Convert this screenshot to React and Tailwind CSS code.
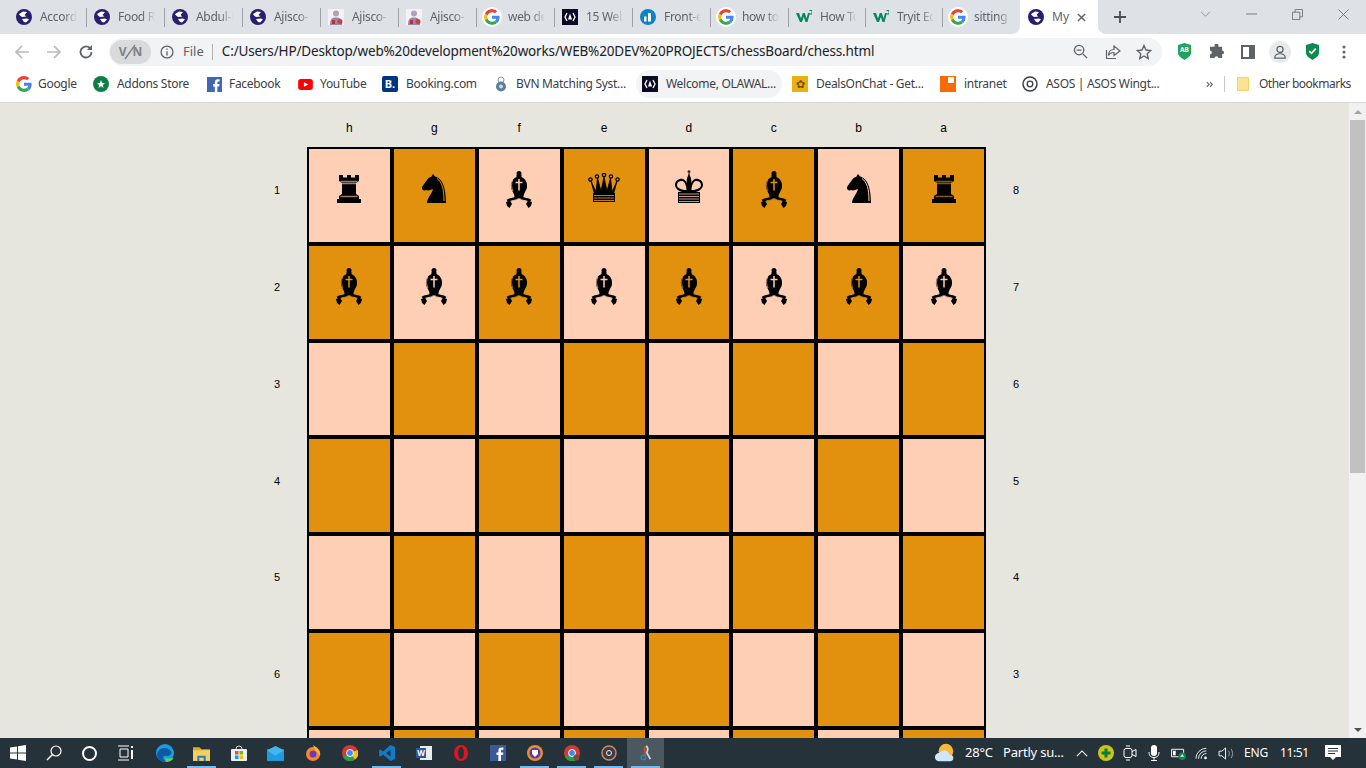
import React from 'react';

const tabs = [
    { icon: 'globe', title: 'Accordion' },
    { icon: 'globe', title: 'Food Recipe' },
    { icon: 'globe', title: 'Abdul-Hakeem' },
    { icon: 'globe', title: 'Ajisco-' },
    { icon: 'avatar', title: 'Ajisco-' },
    { icon: 'avatar', title: 'Ajisco-' },
    { icon: 'google', title: 'web design' },
    { icon: 'fcc', title: '15 Web Dev' },
    { icon: 'bars', title: 'Front-end' },
    { icon: 'google', title: 'how to make' },
    { icon: 'w3', title: 'How To Make', narrow: true },
    { icon: 'w3', title: 'Tryit Editor', narrow: true },
    { icon: 'google', title: 'sitting room', narrow: true, last: true },
];

const Globe = () => (
    <svg viewBox="0 0 16 16" className="w-4 h-4 shrink-0">
        <circle cx="8" cy="8" r="8" fill="#28206f" />
        <path d="M3 5 L7 2.500 L11 3 L8.500 6 L10.500 7.500 L6 8 L4 6.500 Z M6 10 L11 9.500 L13 10.500 L10 13.500 L8 13 Z" fill="#fff" />
    </svg>
);

const GoogleG = () => (
    <svg viewBox="0 0 48 48" className="w-4 h-4 shrink-0">
        <path fill="#EA4335" d="M24 9.500c3.500 0 6.700 1.300 9.100 3.500l6.800-6.800C35.800 2.400 30.300 0 24 0 14.600 0 6.500 5.400 2.600 13.200l7.900 6.100C12.400 13.600 17.700 9.500 24 9.500z" />
        <path fill="#4285F4" d="M46.900 24.500c0-1.600-.1-3.100-.4-4.500H24v9h12.900c-.6 3-2.200 5.500-4.700 7.200l7.700 6c4.500-4.200 7-10.300 7-17.700z" />
        <path fill="#FBBC05" d="M10.500 28.700c-.5-1.400-.8-3-.8-4.700s.3-3.200.8-4.700l-7.900-6.100C.9 16.500 0 20.100 0 24s.9 7.500 2.600 10.800l7.900-6.100z" />
        <path fill="#34A853" d="M24 48c6.500 0 11.900-2.100 15.900-5.800l-7.700-6c-2.200 1.400-4.900 2.300-8.200 2.300-6.300 0-11.600-4.200-13.500-9.800l-7.900 6.100C6.500 42.600 14.600 48 24 48z" />
    </svg>
);

const GoogleBadge = () => (
    <span className="w-[16px] h-[16px] rounded-full bg-white flex items-center justify-center shrink-0 outline outline-2 outline-white">
        <GoogleG />
    </span>
);

const Avatar = () => (
    <svg viewBox="0 0 16 16" className="w-4 h-4 shrink-0">
        <rect width="16" height="16" fill="#f4f2f6" />
        <circle cx="8" cy="4.500" r="3" fill="#a9a4b8" />
        <path d="M2 16 C2 10 4 8.500 8 8.500 S14 10 14 16 Z" fill="#8f8ba3" />
        <rect x="4" y="11" width="3" height="4" fill="#c62a3a" />
        <circle cx="12" cy="12.500" r="2.500" fill="#d23a4a" />
    </svg>
);

const Fcc = () => (
    <svg viewBox="0 0 16 16" className="w-4 h-4 shrink-0">
        <rect width="16" height="16" fill="#0a0a23" />
        <path d="M5 4 L3 8 L5 12 M11 4 L13 8 L11 12" stroke="#fff" strokeWidth="1.300" fill="none" />
        <path d="M8 4.500 L10 10.500 H6 Z" fill="#fff" />
    </svg>
);

const Bars = () => (
    <svg viewBox="0 0 16 16" className="w-4 h-4 shrink-0">
        <circle cx="8" cy="8" r="8" fill="#0a84c8" />
        <rect x="4" y="7.500" width="2.500" height="5" fill="#fff" />
        <rect x="8" y="4" width="3" height="8.500" fill="#fff" />
    </svg>
);

const W3 = () => (
    <svg viewBox="0 0 16 16" className="w-4 h-4 shrink-0">
        <path d="M0 4 H3 L5 9.500 L6.800 4 H8.800 L10.600 9.500 L12 4 H14 L11.500 13 H9.500 L7.800 8 L6 13 H4 Z" fill="#04895c" />
        <path d="M13.500 1.500 H16 V5 H13.500" stroke="#04895c" strokeWidth="1" fill="none" />
    </svg>
);

const tabIcons = { globe: Globe, google: GoogleBadge, avatar: Avatar, fcc: Fcc, bars: Bars, w3: W3 };

const Tab = ({ icon, title, narrow, last }) => {
    const Icon = tabIcons[icon];
    return (
        <div className={`h-[34px] flex items-center pl-[7px] shrink-0 ${narrow ? 'w-[77px]' : 'w-[78px]'}`}>
            <Icon />
            <span className="ml-[8px] w-[37px] text-[12px] tracking-[-0.3px] text-[#5f6368] whitespace-nowrap overflow-hidden [mask-image:linear-gradient(to_right,#000_65%,transparent)]">{title}</span>
            <div className="flex-1" />
            {!last && <div className="w-px h-[19px] bg-[#9da0a5]" />}
        </div>
    );
};

const TabStrip = () => (
    <div className="h-[34px] bg-white flex shrink-0">
        <div className="bg-[#dee1e6] flex pl-[9px] rounded-br-[8px]">
            {tabs.map((t, i) => <Tab key={i} {...t} />)}
        </div>
        <div className="w-[78px] h-[34px] bg-white rounded-t-[8px] flex items-center pl-[8px] shrink-0">
            <Globe />
            <span className="ml-[8px] w-[25px] text-[12px] text-[#5f6368]">My</span>
            <svg viewBox="0 0 10 10" className="w-[9px] h-[9px]"><path d="M1 1 L9 9 M9 1 L1 9" stroke="#5f6368" strokeWidth="1.600" /></svg>
        </div>
        <div className="flex-1 bg-[#dee1e6] rounded-bl-[8px] flex items-start">
            <svg viewBox="0 0 14 14" className="w-[14px] h-[14px] ml-[15px] mt-[10px]"><path d="M7 1 V13 M1 7 H13" stroke="#4a4d52" strokeWidth="1.800" /></svg>
            <div className="flex-1" />
            <div className="w-[46px] h-[28px] flex items-center justify-center">
                <svg viewBox="0 0 12 8" className="w-[11px] h-[7px]"><path d="M1 1 L6 6 L11 1" stroke="#8a8d92" fill="none" /></svg>
            </div>
            <div className="w-[46px] h-[28px] flex items-center justify-center">
                <svg viewBox="0 0 12 2" className="w-[11px] h-[2px]"><path d="M0 1 H12" stroke="#6f7276" /></svg>
            </div>
            <div className="w-[46px] h-[28px] flex items-center justify-center">
                <svg viewBox="0 0 12 12" className="w-[11px] h-[11px]"><path d="M.5 3.500 H8.500 V11.500 H.5 Z M3.500 3.500 V.5 H11.500 V8.500 H8.500" stroke="#6f7276" fill="none" /></svg>
            </div>
            <div className="w-[46px] h-[28px] flex items-center justify-center">
                <svg viewBox="0 0 12 12" className="w-[11px] h-[11px]"><path d="M.5 .5 L11.500 11.500 M11.500 .5 L.5 11.500" stroke="#6f7276" /></svg>
            </div>
        </div>
    </div>
);

const ToolSlot = ({ children }) => <div className="w-8 h-8 flex items-center justify-center shrink-0">{children}</div>;

const Toolbar = () => (
    <div className="h-[35px] bg-white flex items-center shrink-0">
        <svg viewBox="0 0 16 16" className="w-4 h-4 ml-[14px]"><path d="M15 8 H2 M8 2 L2 8 L8 14" stroke="#b8babd" strokeWidth="1.700" fill="none" /></svg>
        <svg viewBox="0 0 16 16" className="w-4 h-4 ml-[16px]"><path d="M1 8 H14 M8 2 L14 8 L8 14" stroke="#b8babd" strokeWidth="1.700" fill="none" /></svg>
        <svg viewBox="0 0 16 16" className="w-4 h-4 ml-[16px]"><path d="M13.500 8 A5.500 5.500 0 1 1 11.800 4" stroke="#5f6368" strokeWidth="1.800" fill="none" /><path d="M14 1 V6 H9 Z" fill="#5f6368" /></svg>
        <div className="ml-[15px] w-[1053px] h-[28px] rounded-full bg-[#f1f3f4] flex items-center">
            <div className="w-[41px] h-[24px] ml-[1px] rounded-full bg-[#d9dadc] flex items-center justify-center text-[12px] font-bold text-[#808286] relative">
                <span>V</span><span className="w-[6px]" /><span>N</span>
                <svg viewBox="0 0 14 16" className="absolute left-[13px] top-[4px] w-[14px] h-[16px]"><path d="M12 1 L2 15" stroke="#808286" strokeWidth="1.400" /></svg>
            </div>
            <svg viewBox="0 0 16 16" className="w-[14px] h-[14px] ml-[9px]"><circle cx="8" cy="8" r="6.800" stroke="#5f6368" strokeWidth="1.500" fill="none" /><path d="M8 7 V12 M8 4 V5.500" stroke="#5f6368" strokeWidth="1.500" /></svg>
            <span className="ml-[9px] text-[13px] text-[#5f6368]">File</span>
            <div className="w-px h-[16px] bg-[#b0b2b5] ml-[8px]" />
            <span className="ml-[9px] text-[13.500px] text-[#202124] whitespace-nowrap tracking-[-0.16px]">C:/Users/HP/Desktop/web%20development%20works/WEB%20DEV%20PROJECTS/chessBoard/chess.html</span>
            <div className="flex-1" />
            <svg viewBox="0 0 16 16" className="w-[15px] h-[15px]"><circle cx="6.500" cy="6.500" r="5" stroke="#5f6368" strokeWidth="1.400" fill="none" /><path d="M10.500 10.500 L15 15 M4 6.500 H9" stroke="#5f6368" strokeWidth="1.400" /></svg>
            <svg viewBox="0 0 16 16" className="w-[16px] h-[16px] ml-[17px]"><path d="M9 5.500 V2 L15 7 L9 11.500 V8.500 C6 8.500 4.500 9.500 3.500 11.500 C3.500 8 5.500 5.500 9 5.500 Z M11 14.500 H1.500 V6" stroke="#5f6368" strokeWidth="1.200" fill="none" /></svg>
            <svg viewBox="0 0 16 16" className="w-[16px] h-[16px] ml-[15px] mr-[10px]"><path d="M8 1.500 L10 6 L14.800 6.500 L11.200 9.700 L12.200 14.500 L8 12 L3.800 14.500 L4.800 9.700 L1.200 6.500 L6 6 Z" stroke="#5f6368" strokeWidth="1.400" fill="none" /></svg>
        </div>
        <div className="w-[6px]" />
        <ToolSlot><svg viewBox="0 0 16 18" className="w-[15px] h-[17px]"><path d="M1 2 L8 0 L15 2 V10 C15 14 11 16 8 18 C5 16 1 14 1 10 Z" fill="#1da462" /><text x="8" y="10" fontSize="7" fill="#fff" textAnchor="middle" fontWeight="bold">AB</text></svg></ToolSlot>
        <ToolSlot><svg viewBox="0 0 16 16" className="w-[15px] h-[15px]"><path d="M6 1 A2 2 0 0 1 10 1 V3 H14 V7 A2 2 0 0 1 14 11 V15 H10 A2 2 0 0 0 6 15 H1 V11 A2 2 0 0 0 1 7 V3 H6 Z" fill="#5f6368" /></svg></ToolSlot>
        <ToolSlot><svg viewBox="0 0 14 14" className="w-[14px] h-[14px]"><rect x="1" y="1" width="12" height="12" fill="none" stroke="#5f6368" strokeWidth="2" /><rect x="8" y="1" width="5" height="12" fill="#5f6368" /></svg></ToolSlot>
        <ToolSlot>
            <div className="w-[22px] h-[22px] rounded-full bg-[#e8eaed] flex items-center justify-center">
                <svg viewBox="0 0 16 16" className="w-[14px] h-[14px]"><circle cx="8" cy="5" r="3.500" stroke="#5f6368" strokeWidth="1.400" fill="none" /><path d="M2 15 C2 11 4.500 10 8 10 S14 11 14 15 Z" stroke="#5f6368" strokeWidth="1.400" fill="none" /></svg>
            </div>
        </ToolSlot>
        <ToolSlot><svg viewBox="0 0 16 18" className="w-[15px] h-[17px]"><path d="M1 2 L8 0 L15 2 V10 C15 14 11 16 8 18 C5 16 1 14 1 10 Z" fill="#0f8a4f" /><path d="M4.500 8.500 L7 11 L11.500 6" stroke="#fff" strokeWidth="1.800" fill="none" /></svg></ToolSlot>
        <ToolSlot><svg viewBox="0 0 4 14" className="w-[4px] h-[14px]"><circle cx="2" cy="2" r="1.500" fill="#5f6368" /><circle cx="2" cy="7" r="1.500" fill="#5f6368" /><circle cx="2" cy="12" r="1.500" fill="#5f6368" /></svg></ToolSlot>
    </div>
);

const Bookmark = ({ icon, label, className, gap = 'ml-[8px]' }) => (
    <div className={`flex items-center shrink-0 ${className}`}>
        <span className="w-4 h-4 flex items-center justify-center">{icon}</span>
        <span className={`${gap} text-[12px] tracking-[-0.3px] text-[#3c4043] whitespace-nowrap`}>{label}</span>
    </div>
);

const BookmarkBar = () => (
    <div className="h-[34px] pb-[3px] bg-white border-b border-[#d5d7da] flex items-center pl-[16px] shrink-0">
        <Bookmark className="w-[77px]" gap="ml-[6px]" label="Google" icon={<GoogleG />} />
        <Bookmark className="w-[113px]" label="Addons Store" icon={<svg viewBox="0 0 16 16" className="w-4 h-4"><circle cx="8" cy="8" r="8" fill="#0b8043" /><path d="M8 4 L9.200 7 L12 7.200 L9.800 9 L10.500 12 L8 10.300 L5.500 12 L6.200 9 L4 7.200 L6.800 7 Z" fill="#fff" /></svg>} />
        <Bookmark className="w-[91px]" gap="ml-[7px]" label="Facebook" icon={<svg viewBox="0 0 16 16" className="w-[15px] h-[15px]"><rect width="16" height="16" fill="#4267b2" /><path d="M11 16 V10 H13 L13.300 7.500 H11 V6 C11 5 11.500 4.700 12.300 4.700 H13.400 V2.500 H11.500 C9.500 2.500 8.400 3.700 8.400 5.700 V7.500 H6.500 V10 H8.400 V16 Z" fill="#fff" /></svg>} />
        <Bookmark className="w-[85px]" gap="ml-[7px]" label="YouTube" icon={<svg viewBox="0 0 16 12" className="w-[15px] h-[11px]"><rect width="16" height="12" rx="3" fill="#f00" /><path d="M6.300 3.500 L11 6 L6.300 8.500 Z" fill="#fff" /></svg>} />
        <Bookmark className="w-[110px]" label="Booking.com" icon={<div className="w-4 h-4 bg-[#003580] text-white text-[11px] font-bold flex items-center justify-center rounded-[2px]">B.</div>} />
        <Bookmark className="w-[144px]" label="BVN Matching Syst..." icon={<svg viewBox="0 0 12 16" className="w-[12px] h-4 ml-[2px]"><circle cx="6" cy="4" r="3" stroke="#8a97a5" fill="none" /><circle cx="6" cy="10.500" r="5" fill="#5c7f99" /><circle cx="6" cy="10.500" r="2" fill="#cfd8de" /></svg>} />
        <div className="h-[28px] w-[146px] rounded-full bg-[#f1f3f4] flex items-center pl-[6px] shrink-0">
            <Fcc />
            <span className="ml-[8px] text-[12px] tracking-[-0.3px] text-[#3c4043] whitespace-nowrap">Welcome, OLAWAL...</span>
        </div>
        <Bookmark className="w-[148px] ml-[10px]" label="DealsOnChat - Get..." icon={<div className="w-4 h-4 bg-[#e8b10d] flex items-center justify-center text-[#7a4a00] text-[11px]">✿</div>} />
        <Bookmark className="w-[82px]" label="intranet" icon={<div className="w-4 h-4 bg-[#f96a00] relative"><div className="absolute right-[2px] top-[1px] w-[6px] h-[6px] bg-white" /></div>} />
        <Bookmark className="w-[184px]" label="ASOS | ASOS Wingt..." icon={<svg viewBox="0 0 16 16" className="w-4 h-4"><circle cx="8" cy="8" r="7" stroke="#3c4043" strokeWidth="1.500" fill="none" /><circle cx="8" cy="8" r="2.800" stroke="#3c4043" strokeWidth="1.300" fill="none" /></svg>} />
        <svg viewBox="0 0 10 8" className="w-[8px] h-[7px]"><path d="M1 1 L4 4 L1 7 M5 1 L8 4 L5 7" stroke="#5f6368" strokeWidth="1.400" fill="none" /></svg>
        <div className="w-px h-[16px] bg-[#c5c7ca] ml-[10px]" />
        <svg viewBox="0 0 14 16" className="w-[12px] h-[14px] ml-[12px]"><path d="M.5 .5 H13.500 V15.500 H.5 Z" fill="#fde293" stroke="#f2c94c" /></svg>
        <span className="ml-[10px] text-[12px] tracking-[-0.5px] text-[#3c4043] whitespace-nowrap">Other bookmarks</span>
    </div>
);

const Rook = () => (
    <svg viewBox="0 0 24 28" className="w-[24px] h-[28px]">
        <path d="M2 0 H6 V2.500 H10 V0 H14 V2.500 H18 V0 H22 V6 L19 8 V19 L22 21 V24 H2 V21 L5 19 V8 L2 6 Z" fill="#000" />
        <path d="M3.500 6.500 H20.500 M4.500 8.500 H19.500 M3.500 21.500 H20.500" stroke="currentColor" strokeWidth="1.400" strokeOpacity=".6" />
        <rect y="24" width="24" height="4" fill="#000" />
    </svg>
);

const Knight = () => (
    <svg viewBox="0 0 24 29" className="w-[24px] h-[29px]">
        <path d="M11 0 L13 2.500 C19 4 24 11 24 29 H5 C5 24 10 20 11 15 C8 16 6 17 4 16 C2 17 0 16 0 14 C0 12 3 9 5 6 C6 4 8 3 9 3 Z" fill="#000" />
        <path d="M15 4.500 C20 8 22 15 22 27" stroke="currentColor" strokeWidth="1" fill="none" />
    </svg>
);

const Bishop = () => (
    <svg viewBox="0 0 26 37" className="w-[26px] h-[37px]">
        <circle cx="13" cy="2.500" r="2.500" fill="#000" />
        <path d="M10.500 4 H15.500 V6 C19 7.500 21.500 11 21 16 C20.500 20 17.500 22 17.500 26 H8.500 C8.500 22 5.500 20 5 16 C4.500 11 7 7.500 10.500 6 Z" fill="#000" />
        <path d="M13 8 V19.500 M9.500 11.500 H16.500" stroke="currentColor" strokeWidth="1.500" />
        <path d="M6.800 9 C5 12 5.200 17 7 20" stroke="currentColor" strokeWidth=".7" fill="none" />
        <path d="M13 25.500 C10 29 5 27.500 1.500 30 M13 25.500 C16 29 21 27.500 24.500 30" stroke="#000" strokeWidth="3" fill="none" />
        <path d="M12.500 27.500 C10 30 6 29 3 31 M13.500 27.500 C16 30 20 29 23 31" stroke="currentColor" strokeWidth=".9" fill="none" />
        <path d="M0 31 L4 29.500 L6 33 L3.500 37 L1 35 Z M26 31 L22 29.500 L20 33 L22.500 37 L25 35 Z" fill="#000" />
    </svg>
);

const Queen = () => (
    <svg viewBox="0 0 32 30" className="w-[32px] h-[30px]">
        <g fill="currentColor" stroke="#000" strokeWidth="1.200">
            <circle cx="2.500" cy="6.500" r="1.700" />
            <circle cx="9" cy="3.500" r="1.700" />
            <circle cx="16" cy="2" r="1.700" />
            <circle cx="23" cy="3.500" r="1.700" />
            <circle cx="29.500" cy="6.500" r="1.700" />
        </g>
        <path d="M3 8 L8 19 L9.500 5 L13 18 L16 4 L19 18 L22.500 5 L24 19 L29 8 L25.500 21 H6.500 Z" fill="#000" stroke="#000" strokeWidth=".8" />
        <path d="M5 20 H27 V29 H5 Z" fill="#000" />
        <path d="M6 22.500 H26 M6 25 H26 M6 27.500 H26" stroke="currentColor" strokeWidth="1" strokeOpacity=".85" />
    </svg>
);

const King = () => (
    <svg viewBox="0 0 28 33" className="w-[28px] h-[33px]">
        <path d="M14 0 V5 M12.500 1.800 H15.500" stroke="#000" strokeWidth="1" />
        <path d="M14 4 C17 8 17 15 15 22 H13 C11 15 11 8 14 4 Z" fill="#000" />
        <path d="M13.500 23 C7 23 0 20 0 15 C0 10 5 8 8 9 C12 10.500 13.500 17 13.500 23 Z M14.500 23 C21 23 28 20 28 15 C28 10 23 8 20 9 C16 10.500 14.500 17 14.500 23 Z" fill="#000" />
        <path d="M11.500 20 C7 20 2 18.500 2 15 C2 11.500 5 10.500 7.500 11 C10 12 11.500 16 11.500 20 Z M16.500 20 C21 20 26 18.500 26 15 C26 11.500 23 10.500 20.500 11 C18 12 16.500 16 16.500 20 Z" fill="currentColor" />
        <rect x="3" y="22" width="22" height="11" fill="#000" />
        <path d="M4 24 H24 M4 26.500 H24 M4 29 H24 M4 31.500 H24" stroke="currentColor" strokeWidth="1.200" strokeOpacity=".75" />
    </svg>
);

const LIGHT = 'bg-[#ffcfb5] text-[#ffcfb5]';
const DARK = 'bg-[#e2910e] text-[#e2910e]';

const pieces = { r: Rook, n: Knight, b: Bishop, q: Queen, k: King };
const rows = [
    { left: 1, right: 8, pieces: 'rnbqkbnr' },
    { left: 2, right: 7, pieces: 'bbbbbbbb' },
    { left: 3, right: 6 },
    { left: 4, right: 5 },
    { left: 5, right: 4 },
    { left: 6, right: 3 },
    { left: 7, right: 2 },
    { left: 8, right: 1 },
];
const files = ['h', 'g', 'f', 'e', 'd', 'c', 'b', 'a'];

const Board = () => (
    <div className="ml-[247px] w-[799px]">
        <div className="h-[44px] ml-[60px] w-[679px] px-[2px] grid grid-cols-8 gap-1">
            {files.map((f) => (
                <div key={f} className="flex items-center justify-center text-[12px] text-black pt-[6px]">{f}</div>
            ))}
        </div>
        {rows.map((row, r) => (
            <div key={row.left} className="flex h-[96.830px]">
                <div className="w-[60px] pb-[10px] flex items-center justify-center text-[11px] text-black">{row.left}</div>
                <div className="w-[679px] bg-black p-[2px] grid grid-cols-8 gap-1">
                    {files.map((f, c) => {
                        const Piece = row.pieces ? pieces[row.pieces[c]] : null;
                        return (
                            <div key={f} className={`flex items-end justify-center ${Piece === Bishop ? 'pb-[34px]' : 'pb-[39px]'} ${(r + c) % 2 === 0 ? LIGHT : DARK}`}>
                                {Piece && <Piece />}
                            </div>
                        );
                    })}
                </div>
                <div className="w-[60px] pb-[10px] flex items-center justify-center text-[11px] text-black">{row.right}</div>
            </div>
        ))}
    </div>
);

const Scrollbar = () => (
    <div className="w-[17px] bg-[#f1f1f1] flex flex-col items-center shrink-0">
        <div className="h-[17px] flex items-center justify-center">
            <div className="w-0 h-0 border-x-[4px] border-x-transparent border-b-[4px] border-b-[#a3a3a3]" />
        </div>
        <div className="w-[15px] h-[353px] bg-[#c1c1c1]" />
        <div className="flex-1" />
        <div className="h-[17px] flex items-center justify-center">
            <div className="w-0 h-0 border-x-[4px] border-x-transparent border-t-[4px] border-t-[#505050]" />
        </div>
    </div>
);

const Running = ({ active, running, children }) => (
    <div className={`w-[37px] h-[30px] flex items-center justify-center relative shrink-0 ${active ? 'bg-[#4b585f]' : ''}`}>
        {children}
        {running && <div className="absolute bottom-0 left-[4px] right-[4px] h-[2px] bg-[#76b9ed]" />}
    </div>
);

const TraySlot = ({ children }) => <div className="w-[24px] flex items-center justify-center shrink-0">{children}</div>;

const Taskbar = () => (
    <div className="h-[30px] bg-[#263239] flex items-center shrink-0 text-white">
        <div className="w-[36px] flex justify-center">
            <svg viewBox="0 0 16 16" className="w-4 h-4"><path d="M0 2.500 L7 1.500 V7.500 H0 Z M8 1.300 L16 0 V7.500 H8 Z M0 8.500 H7 V14.500 L0 13.500 Z M8 8.500 H16 V16 L8 14.700 Z" fill="#fff" /></svg>
        </div>
        <div className="w-[36px] flex justify-center">
            <svg viewBox="0 0 16 16" className="w-4 h-4"><circle cx="10" cy="6" r="5" stroke="#fff" strokeWidth="1.200" fill="none" /><path d="M6.500 9.500 L1 15" stroke="#fff" strokeWidth="1.400" /></svg>
        </div>
        <div className="w-[35px] flex justify-center">
            <div className="w-[15px] h-[15px] rounded-full border-2 border-white" />
        </div>
        <div className="w-[36px] flex justify-center">
            <svg viewBox="0 0 16 16" className="w-4 h-4"><path d="M1 1 H12 M1 15 H12 M3 4 H11 V12 H3 Z" stroke="#fff" fill="none" /><rect x="14" y="1" width="2" height="2" fill="#fff" /><rect x="14" y="5" width="2" height="9" fill="#fff" /></svg>
        </div>
        <div className="w-[3px]" />
        <Running><svg viewBox="0 0 16 16" className="w-[18px] h-[18px]"><circle cx="8" cy="8" r="8" fill="#1b9de2" /><path d="M1 9 C2 3 10 2 13 6 C15 9 12 11 9 10.500 C6 10 5 13 9 15.500 C4 16 1 13 1 9 Z" fill="#0c59a4" /><path d="M9 16 C13 16 15 14 15.500 12 C13 13 10 13.500 8 12 Z" fill="#5ed25a" /></svg></Running>
        <Running running><svg viewBox="0 0 16 14" className="w-[17px] h-[15px]"><path d="M0 1 H6 L8 3 H16 V5 H0 Z" fill="#e0a825" /><rect y="4" width="16" height="10" fill="#f5cf5f" /><path d="M4 14 V9 H12 V14 H10 V11 H6 V14 Z" fill="#2d7fc3" /></svg></Running>
        <Running><svg viewBox="0 0 16 16" className="w-4 h-4"><path d="M5 4 A3 3 0 0 1 11 4" stroke="#ddd" fill="none" /><rect y="4" width="16" height="12" rx="1" fill="#eceff1" /><rect x="4" y="6" width="3.500" height="3.500" fill="#f25022" /><rect x="8.500" y="6" width="3.500" height="3.500" fill="#7fba00" /><rect x="4" y="10.500" width="3.500" height="3.500" fill="#00a4ef" /><rect x="8.500" y="10.500" width="3.500" height="3.500" fill="#ffb900" /></svg></Running>
        <Running><svg viewBox="0 0 16 14" className="w-[17px] h-[15px]"><rect y="3" width="16" height="11" fill="#1f9be0" /><path d="M0 4 L8 0 L16 4 L8 9 Z" fill="#43b6f0" /></svg></Running>
        <Running><svg viewBox="0 0 16 16" className="w-4 h-4"><circle cx="8" cy="9" r="7" fill="#f8862a" /><path d="M8 0 C13 3 16 6 15 11 L10 5 Z" fill="#fbb03b" /><circle cx="8" cy="9" r="3.500" fill="#6d3bb8" /></svg></Running>
        <Running><svg viewBox="0 0 16 16" className="w-4 h-4"><circle cx="8" cy="8" r="8" fill="#d9382c" /><path d="M8 8 L1 12 A8 8 0 0 0 13 14.500 Z" fill="#2d9e48" /><path d="M8 8 L13 14.500 A8 8 0 0 0 15.600 5 Z" fill="#f7c10c" /><circle cx="8" cy="8" r="3.500" fill="#4285f4" stroke="#fff" /></svg></Running>
        <Running running><svg viewBox="0 0 16 16" className="w-4 h-4"><path d="M11.500 0 L16 2 V14 L11.500 16 L4 9.500 L1.500 11.500 L0 10.500 V5.500 L1.500 4.500 L4 6.500 Z M11.500 4.500 L7 8 L11.500 11.500 Z" fill="#0f7cc9" fillRule="evenodd" /></svg></Running>
        <Running><svg viewBox="0 0 16 16" className="w-4 h-4"><rect x="4" y="1" width="12" height="14" fill="#e8edf3" /><rect y="3" width="10" height="10" fill="#2b579a" /><text x="5" y="11" fontSize="8" fill="#fff" textAnchor="middle" fontWeight="bold">W</text></svg></Running>
        <Running><svg viewBox="0 0 16 16" className="w-4 h-4"><ellipse cx="8" cy="8" rx="7" ry="8" fill="#e2151f" /><ellipse cx="8" cy="8" rx="3" ry="6" fill="#263239" /></svg></Running>
        <Running><svg viewBox="0 0 16 16" className="w-4 h-4"><rect width="16" height="16" fill="#3b5998" /><path d="M11 16 V10 H13 L13.300 7.500 H11 V6 C11 5 11.500 4.700 12.300 4.700 H13.400 V2.500 H11.500 C9.500 2.500 8.400 3.700 8.400 5.700 V7.500 H6.500 V10 H8.400 V16 Z" fill="#fff" /></svg></Running>
        <Running running><svg viewBox="0 0 16 16" className="w-4 h-4"><circle cx="8" cy="8" r="8" fill="#e8912c" /><circle cx="8" cy="8" r="5.500" fill="#5b34b4" /><path d="M5 5 H11 V9 L8 12 L5 9 Z" fill="#fff" /></svg></Running>
        <Running running><svg viewBox="0 0 16 16" className="w-4 h-4"><circle cx="8" cy="8" r="8" fill="#d9382c" /><path d="M8 8 L1 12 A8 8 0 0 0 13 14.500 Z" fill="#2d9e48" /><circle cx="8" cy="8" r="3.500" fill="#4285f4" stroke="#fff" /><circle cx="12.500" cy="12.500" r="3" fill="#7b4a32" /></svg></Running>
        <Running running><svg viewBox="0 0 16 16" className="w-4 h-4"><circle cx="8" cy="8" r="7" stroke="#c98a5c" strokeWidth="1.500" fill="#3a3a4a" /><circle cx="8" cy="8" r="2.500" stroke="#eee" fill="none" /></svg></Running>
        <Running active running><svg viewBox="0 0 16 18" className="w-[14px] h-[18px]"><path d="M8 1 C12 3 9 8 9 9 L13 16" stroke="#d5d9dc" strokeWidth="2" fill="none" /><path d="M7 2 C5 6 7 9 8 11" stroke="#e2452b" strokeWidth="2" fill="none" /><circle cx="5" cy="14" r="2.500" stroke="#2f84d0" strokeWidth="1.500" fill="none" /></svg></Running>
        <div className="flex-1" />
        <svg viewBox="0 0 24 20" className="w-[22px] h-[20px] mr-[9px]"><circle cx="13" cy="8" r="8" fill="#f8b83a" /><path d="M5 19 A4.500 4.500 0 0 1 6 10 A6 6 0 0 1 17 12 A3.500 3.500 0 0 1 18 19 Z" fill="#d0e6f8" /></svg>
        <span className="w-[38px] text-[13px] tracking-[-0.2px] whitespace-nowrap">28°C</span>
        <span className="w-[67px] text-[13px] tracking-[-0.2px] whitespace-nowrap">Partly su...</span>
        <TraySlot><svg viewBox="0 0 14 8" className="w-[12px] h-[7px]"><path d="M1 7 L7 1 L13 7" stroke="#fff" strokeWidth="1.200" fill="none" /></svg></TraySlot>
        <TraySlot><svg viewBox="0 0 16 16" className="w-[16px] h-[16px]"><circle cx="8" cy="8" r="8" fill="#c8c617" /><path d="M8 3.500 V12.500 M3.500 8 H12.500" stroke="#0f7d3a" strokeWidth="3" /></svg></TraySlot>
        <TraySlot><svg viewBox="0 0 14 16" className="w-[14px] h-[16px]"><rect x="1" y="3.500" width="8" height="9" rx="2" stroke="#fff" fill="none" /><path d="M9 6.500 L13 4.500 V11.500 L9 9.500 M3 1 H7 M3 15 H7" stroke="#fff" fill="none" /></svg></TraySlot>
        <TraySlot><svg viewBox="0 0 12 16" className="w-[12px] h-[16px]"><rect x="3" y="0" width="6" height="11" rx="3" fill="#fff" /><path d="M1 7 C1 11 3 12.500 6 12.500 S11 11 11 7 M6 12.500 V15 M3 15.500 H9" stroke="#fff" fill="none" /></svg></TraySlot>
        <TraySlot><svg viewBox="0 0 16 14" className="w-[15px] h-[13px]"><path d="M.5 2.500 H13.500 V10.500 H.5 Z" stroke="#fff" fill="none" /><rect x="2" y="4" width="3" height="5" fill="#fff" /><circle cx="12" cy="10" r="4" fill="#0f8a4f" /><path d="M12 7.500 L14 10.500 H10 Z" fill="#fff" /></svg></TraySlot>
        <TraySlot><svg viewBox="0 0 16 14" className="w-[14px] h-[13px]"><path d="M1 13 A12 12 0 0 1 13 1 M4 13 A9 9 0 0 1 13 4 M7 13 A6 6 0 0 1 13 7" stroke="#fff" fill="none" /><circle cx="12" cy="12" r="1.500" fill="#fff" /></svg></TraySlot>
        <TraySlot><svg viewBox="0 0 18 14" className="w-[17px] h-[13px]"><path d="M1 4.500 H4 L8 1 V13 L4 9.500 H1 Z" stroke="#fff" fill="none" /><path d="M11 4 C12.500 6 12.500 8 11 10 M14 2 C16 5 16 9 14 12" stroke="#9aa3a8" fill="none" /></svg></TraySlot>
        <span className="w-[36px] ml-[6px] text-[12px] tracking-[-0.2px]">ENG</span>
        <span className="w-[44px] text-[12px] tracking-[-0.4px]">11:51</span>
        <svg viewBox="0 0 16 16" className="w-[16px] h-[16px] ml-[1px] mr-[25px]"><path d="M0 0 H16 V12 H11 L8 15 L5 12 H0 Z" fill="#fff" /><path d="M3 3.500 H13 M3 6 H13 M3 8.500 H10" stroke="#263239" /></svg>
    </div>
);

const App = () => (
    <div className="w-[1366px] h-[768px] flex flex-col overflow-hidden font-['Noto_Sans',sans-serif]">
        <TabStrip />
        <Toolbar />
        <BookmarkBar />
        <div className="flex-1 flex min-h-0 bg-[#e6e6de]">
            <main className="flex-1 overflow-hidden font-['Liberation_Sans',sans-serif]">
                <Board />
            </main>
            <Scrollbar />
        </div>
        <Taskbar />
    </div>
);

export default App;
